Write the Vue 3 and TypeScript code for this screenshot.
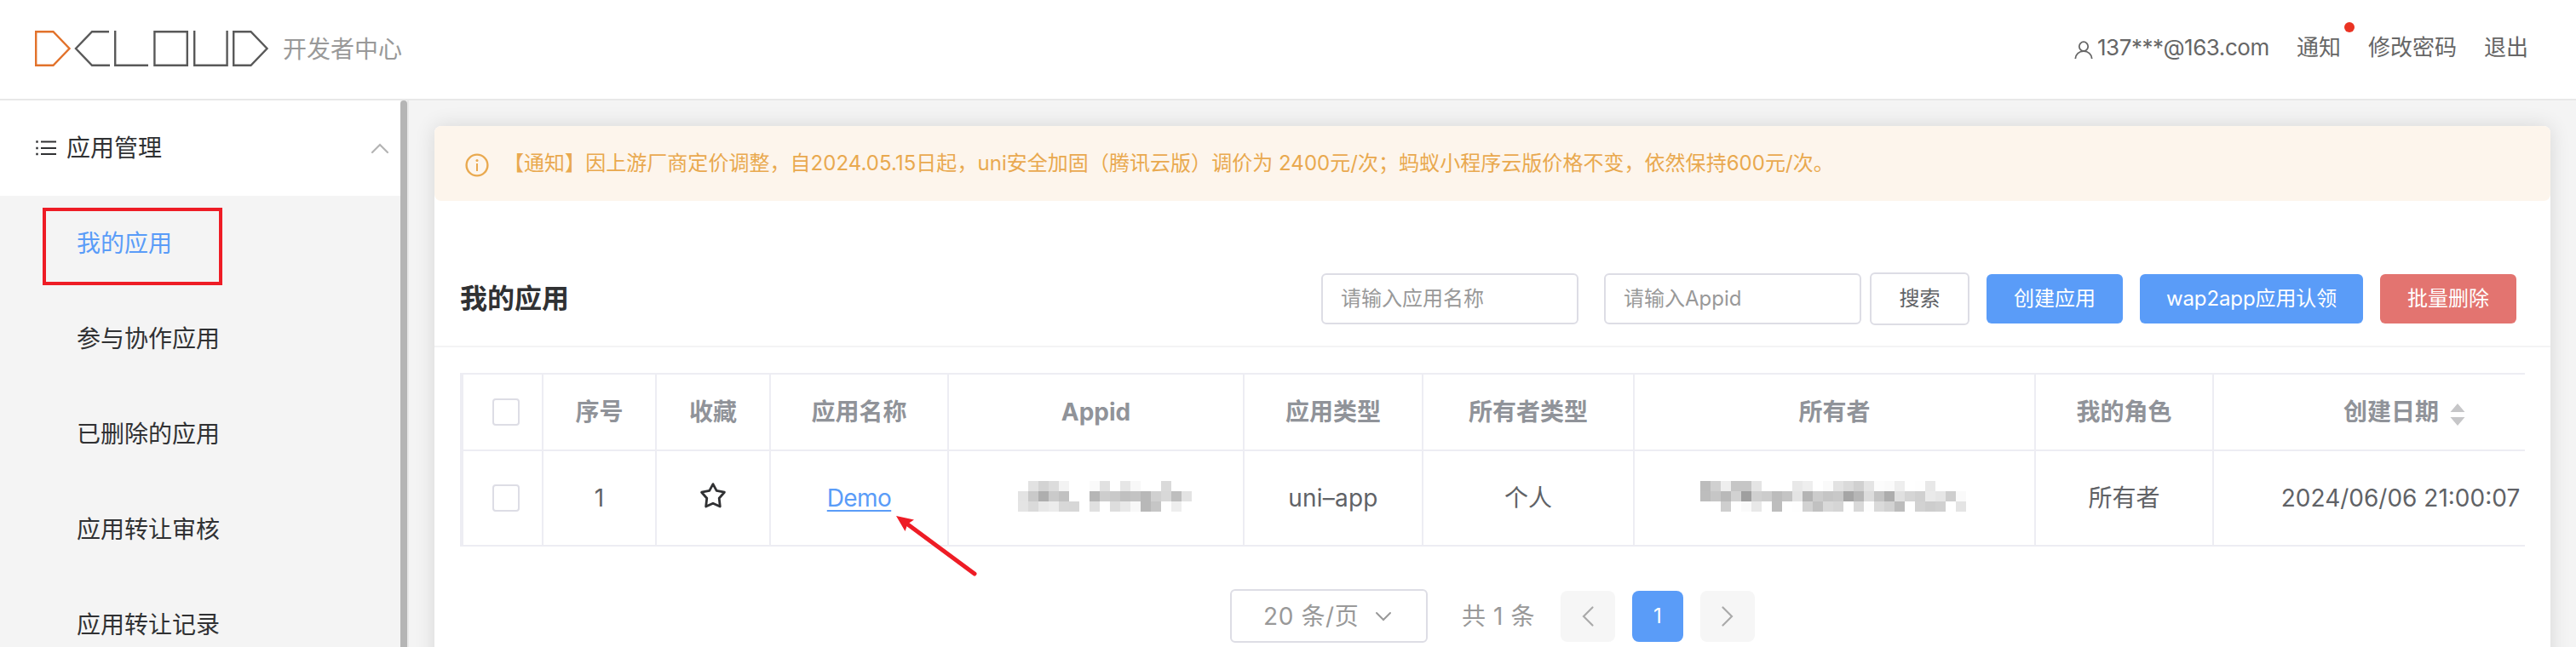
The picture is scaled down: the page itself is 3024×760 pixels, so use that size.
<script setup lang="ts">
interface Column {
  key: string
  label: string
}

const menu: string[] = ['我的应用', '参与协作应用', '已删除的应用', '应用转让审核', '应用转让记录']

const columns: Column[] = [
  { key: 'index', label: '序号' },
  { key: 'star', label: '收藏' },
  { key: 'name', label: '应用名称' },
  { key: 'appid', label: 'Appid' },
  { key: 'type', label: '应用类型' },
  { key: 'ownerType', label: '所有者类型' },
  { key: 'owner', label: '所有者' },
  { key: 'role', label: '我的角色' },
]

const parse = (rows: string[]): string[][] => rows.map((r) => r.split(' '))

const appidMask = parse([
  'ff e2 d3 dc f3 ff ff fa e1 ff e6 f8 ff ff da ff ff',
  'e3 c9 ae ca c1 ff ff b6 cd c9 c0 c3 b8 d0 d8 be e3',
  'e4 da e8 ec d8 d7 ff e0 ff dd e9 f8 b8 c6 ff ee ff',
])
const ownerMask = parse([
  'bc d0 ee c6 c6 e4 ff ff ff e8 ee ff fa e2 da d0 e4 fc fa ee ff fe e8 ff ff ff',
  'bd c6 b9 d2 9f d0 cc bc c4 e4 b4 cc c5 c8 a5 b6 dc c3 ad e0 d5 d0 ea e6 ce fa',
  'ff ff ce ff fa e8 ff bd ff fe d2 c1 d9 d5 ff d9 fd da d2 bc ff d2 cd d0 ff e4',
])
</script>

<template>
  <div class="page">
    <header class="top">
      <svg class="logo" width="276" height="42" viewBox="0 0 276 42" fill="none" stroke="#595959" stroke-width="2.4">
        <path d="M1.2 1.2H21.5L40.5 21L21.5 40.8H1.2Z" stroke="#e2722b" />
        <path d="M87 1.2H67L48 21L67 40.8H88" />
        <path d="M94.2 0V40.8H133" />
        <path d="M140.4 1.2H178.8V40.8H140.4Z" />
        <path d="M187.2 0V40.8H225.6V0" />
        <path d="M233.2 1.2H253.5L272.5 21L253.5 40.8H233.2Z" />
      </svg>
      <span class="brand">开发者中心</span>
      <nav class="user">
        <svg width="22" height="22" viewBox="0 0 22 22" fill="none" stroke="#666" stroke-width="1.8">
          <ellipse cx="11" cy="6.6" rx="5.2" ry="5.4" />
          <path d="M1.3 21C1.6 15.8 5.6 12.2 11 12.2S20.4 15.8 20.7 21" />
        </svg>
        <span class="mail">137***@163.com</span>
        <span class="notice">通知<i class="dot"></i></span>
        <span class="pwd">修改密码</span>
        <span>退出</span>
      </nav>
    </header>

    <div class="body">
      <aside class="side">
        <div class="menu">
          <div class="group">
            <svg width="24" height="20" viewBox="0 0 24 20" stroke="#303133" stroke-width="2">
              <path d="M6 2.5H24M6 10H24M6 17H24" />
              <path d="M0.3 2.5H2.7M0.3 10H2.7M0.3 17H2.7" stroke-width="2.6" />
            </svg>
            <span>应用管理</span>
            <svg class="fold" width="22" height="14" viewBox="0 0 22 14" fill="none" stroke="#b4b4b4" stroke-width="2.2" stroke-linecap="round">
              <path d="M2 12L11 3L20 12" />
            </svg>
          </div>
          <div v-for="(m, i) in menu" :key="m" class="item" :class="{ active: i === 0 }">
            {{ m }}<i v-if="i === 0" class="frame"></i>
          </div>
        </div>
        <div class="bar"></div>
      </aside>

      <main class="card">
        <div class="alert">
          <svg width="28" height="28" viewBox="0 0 28 28" fill="none" stroke="#e9a94f" stroke-width="2.4">
            <circle cx="14" cy="14" r="12.4" />
            <path d="M14 12V21" stroke-width="2" />
            <circle cx="14" cy="8.4" r="1.5" fill="#e9a94f" stroke="none" />
          </svg>
          <span>【通知】因上游厂商定价调整，自2024.05.15日起，uni安全加固（腾讯云版）调价为 2400元/次；蚂蚁小程序云版价格不变，依然保持600元/次。</span>
        </div>

        <div class="toolbar">
          <h1>我的应用</h1>
          <div class="field">请输入应用名称</div>
          <div class="field second">请输入Appid</div>
          <div class="btn plain">搜索</div>
          <div class="btn create">创建应用</div>
          <div class="btn wap">wap2app应用认领</div>
          <div class="btn danger">批量删除</div>
        </div>

        <div class="table">
          <div class="row head">
            <div class="cell"><i class="check"></i></div>
            <div v-for="c in columns" :key="c.key" class="cell">{{ c.label }}</div>
            <div class="cell date-head">
              创建日期
              <svg width="18" height="26" viewBox="0 0 18 26" fill="#c6c6c8">
                <path d="M9 0L17.5 10H0.5ZM9 26L17.5 16H0.5Z" />
              </svg>
            </div>
          </div>
          <div class="row data">
            <div class="cell"><i class="check"></i></div>
            <div class="cell">1</div>
            <div class="cell">
              <svg class="star" width="32" height="32" viewBox="0 0 32 32" fill="none" stroke="#303133" stroke-width="2.8" stroke-linejoin="round">
                <path d="M16 2.6L20.2 10.4L29.4 12.2L23.2 19.2L24.3 29L16 25.2L7.7 29L8.8 19.2L2.6 12.2L11.8 10.4Z" />
              </svg>
            </div>
            <div class="cell"><a class="link">Demo</a></div>
            <div class="cell">
              <svg class="mask" width="204" height="36" shape-rendering="crispEdges">
                <template v-for="(r, y) in appidMask" :key="y">
                  <rect v-for="(v, x) in r" :key="x" :x="x * 12" :y="y * 12" width="12" height="12" :fill="'#' + v + v + v" />
                </template>
              </svg>
            </div>
            <div class="cell"><span class="type">uni–app</span></div>
            <div class="cell">个人</div>
            <div class="cell">
              <svg class="mask owner" width="312" height="36" shape-rendering="crispEdges">
                <template v-for="(r, y) in ownerMask" :key="y">
                  <rect v-for="(v, x) in r" :key="x" :x="x * 12" :y="y * 12" width="12" height="12" :fill="'#' + v + v + v" />
                </template>
              </svg>
            </div>
            <div class="cell">所有者</div>
            <div class="cell"><span class="date">2024/06/06 21:00:07</span></div>
          </div>
        </div>

        <div class="pager">
          <div class="size">
            <span>20 条/页</span>
            <svg width="20" height="12" viewBox="0 0 20 12" fill="none" stroke="#999" stroke-width="2" stroke-linecap="round">
              <path d="M2 2L10 10L18 2" />
            </svg>
          </div>
          <span class="total">共 1 条</span>
          <div class="pg">
            <svg width="16" height="26" viewBox="0 0 16 26" fill="none" stroke="#aaa" stroke-width="2.2" stroke-linecap="round"><path d="M13.5 2.5L3 13L13.5 23.5" /></svg>
          </div>
          <div class="pg on">1</div>
          <div class="pg">
            <svg width="16" height="26" viewBox="0 0 16 26" fill="none" stroke="#aaa" stroke-width="2.2" stroke-linecap="round"><path d="M2.5 2.5L13 13L2.5 23.5" /></svg>
          </div>
        </div>
      </main>
    </div>

    <svg class="arrow" width="100" height="76" viewBox="0 0 100 76">
      <path d="M13 10L94 70" stroke="#ee1c25" stroke-width="5" stroke-linecap="round" />
      <path d="M2 2L23 6.5L15.5 11.5L12.5 20Z" fill="#ee1c25" />
    </svg>
  </div>
</template>

<style>
body {
  margin: 0;
  overflow: hidden;
}
</style>

<style scoped>
.page {
  position: relative;
  width: 3024px;
  height: 760px;
  overflow: hidden;
  background: #f4f4f4;
  font-family: Inter, "Noto Sans CJK SC", sans-serif;
  font-size: 28px;
  line-height: 40px;
  color: #303133;
  white-space: nowrap;
}
.page * {
  box-sizing: border-box;
}
i {
  font-style: normal;
}
svg {
  display: block;
  flex: none;
}
.top {
  display: flex;
  align-items: center;
  height: 118px;
  padding: 0 56px 0 41px;
  background: #fff;
  border-bottom: 2px solid #e8e8e8;
}
.logo {
  margin-top: -2px;
}
.brand {
  margin: -1px 0 0 15px;
  color: #999;
}
.user {
  display: flex;
  align-items: center;
  margin: -4px 0 0 auto;
  font-size: 26px;
  color: #666;
}
.user svg {
  margin: 6px 5px 0 0;
}
.mail {
  width: 202px;
  margin-right: 32px;
  letter-spacing: -0.45px;
}
.notice {
  position: relative;
  margin-right: 32px;
}
.dot {
  position: absolute;
  top: -10px;
  left: 56px;
  width: 12px;
  height: 12px;
  border-radius: 50%;
  background: #ea3323;
}
.pwd {
  margin-right: 32px;
}
.body {
  display: flex;
  height: 642px;
}
.side {
  display: flex;
  width: 480px;
  border-right: 2px solid #e9e9e9;
}
.menu {
  width: 470px;
}
.bar {
  width: 8px;
  border-radius: 4px 4px 0 0;
  background: #b5b5b5;
}
.group {
  display: flex;
  align-items: center;
  height: 112px;
  padding: 0 13px 0 42px;
  background: #fff;
}
.group span {
  margin-left: 12px;
}
.fold {
  margin-left: auto;
}
.item {
  position: relative;
  height: 112px;
  padding-left: 90px;
  line-height: 113px;
}
.active {
  color: #5a9cf8;
}
.frame {
  position: absolute;
  left: 50px;
  top: 14px;
  width: 211px;
  height: 91px;
  border: 4px solid #ee1c25;
}
.card {
  width: 2484px;
  height: 700px;
  margin: 30px 0 0 30px;
  border-radius: 8px;
  background: #fff;
  box-shadow: 0 0 24px rgba(0, 0, 0, 0.12);
}
.alert {
  display: flex;
  align-items: center;
  height: 88px;
  padding-left: 36px;
  border-radius: 8px;
  background: #fdf5ec;
  color: #e9a94f;
  font-size: 24px;
}
.alert svg {
  margin-top: 3px;
}
.alert span {
  margin-left: 17px;
  letter-spacing: 0.04px;
}
.toolbar {
  display: flex;
  align-items: center;
  height: 172px;
  padding: 60px 40px 0 30px;
  border-bottom: 2px solid #f3f3f4;
  font-size: 24px;
}
h1 {
  margin: 0 auto 0 0;
  font-size: 32px;
  font-weight: 700;
}
.field {
  width: 302px;
  height: 60px;
  padding-left: 21px;
  border: 2px solid #dddde5;
  border-radius: 6px;
  line-height: 56px;
  color: #999;
}
.second {
  margin: 0 10px 0 30px;
}
.btn {
  display: flex;
  align-items: center;
  justify-content: center;
  height: 58px;
  border-radius: 6px;
  color: #fff;
}
.plain {
  width: 117px;
  height: 62px;
  border: 2px solid #dddde5;
  color: #606266;
}
.create {
  width: 160px;
  margin-left: 20px;
  background: #5a9cf8;
}
.wap {
  width: 262px;
  margin: 0 20px;
  background: #5a9cf8;
  letter-spacing: -0.1px;
}
.danger {
  width: 160px;
  background: #e37470;
}
.table {
  width: 2424px;
  margin: 30px 0 0 30px;
  overflow: hidden;
  border-left: 4px solid #ededf3;
  border-top: 2px solid #ededf3;
}
.row {
  display: grid;
  width: 2495px;
  grid-template-columns: 94px 133px 134px 209px 347px 210px 248px 471px 209px 440px;
  border-bottom: 2px solid #ededf3;
  color: #606266;
}
.head {
  height: 90px;
  font-weight: 700;
  color: #909399;
}
.data {
  height: 112px;
}
.cell {
  display: flex;
  align-items: center;
  justify-content: center;
  border-right: 2px solid #ededf3;
}
.check {
  width: 32px;
  height: 32px;
  margin-left: 8px;
  border: 2px solid #dddde5;
  border-radius: 4px;
}
.date-head {
  justify-content: flex-start;
  padding-left: 152px;
}
.date-head svg {
  margin: 6px 0 0 13px;
}
.star {
  margin-top: -7px;
}
.link {
  letter-spacing: -0.6px;
  color: #5a9cf8;
  text-decoration: underline;
  text-decoration-thickness: 2px;
  text-underline-offset: 4px;
}
.type {
  letter-spacing: 0.2px;
}
.mask {
  margin: -4px 0 0 20px;
}
.owner {
  margin-left: -3px;
}
.pager {
  display: flex;
  align-items: center;
  margin: 50px 0 0 934px;
  color: #999;
}
.size {
  display: flex;
  align-items: center;
  width: 232px;
  height: 63px;
  padding-left: 37px;
  border: 2px solid #dddde5;
  border-radius: 6px;
}
.size span {
  width: 131px;
  letter-spacing: 0.6px;
}
.total {
  width: 116px;
  margin-left: 40px;
  letter-spacing: 0.6px;
}
.pg {
  display: flex;
  align-items: center;
  justify-content: center;
  width: 64px;
  height: 60px;
  border-radius: 8px;
  background: #f6f6f6;
  font-size: 24px;
}
.pg.on {
  width: 60px;
  margin: 0 20px;
  background: #5a9cf8;
  color: #fff;
}
.arrow {
  position: absolute;
  left: 1050px;
  top: 604px;
}
</style>
